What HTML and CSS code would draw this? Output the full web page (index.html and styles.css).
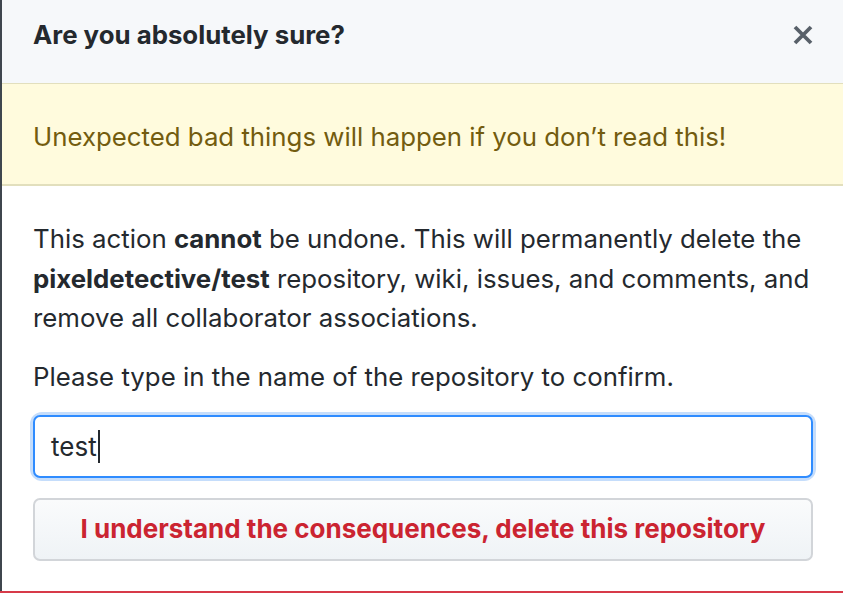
FILE: index.html
```html
<!DOCTYPE html>
<html lang="en">
<head>
<meta charset="utf-8">
<title>Delete repository</title>
<link rel="stylesheet" href="styles.css">
</head>
<body>
<div class="page">
  <div class="backdrop-edge"></div>
  <div class="modal">
    <div class="modal-header">
      <h3 class="modal-title">Are you absolutely sure?</h3>
      <button class="close-btn" aria-label="Close">
        <svg width="22" height="22" viewBox="0 0 22 22"><path d="M3 3 L19 19 M19 3 L3 19" stroke="#586069" stroke-width="3.8" stroke-linecap="butt" fill="none"/></svg>
      </button>
    </div>
    <div class="flash">Unexpected bad things will happen if you don’t read this!</div>
    <div class="modal-body">
      <p class="text">This action <strong>cannot</strong> be undone. This will permanently delete the <strong>pixeldetective/test</strong> repository, wiki, issues, and comments, and remove all collaborator associations.</p>
      <p class="text">Please type in the name of the repository to confirm.</p>
      <div class="input-wrap">
        <div class="input"><span>test</span><span class="caret"></span></div>
      </div>
      <button class="danger-btn">I understand the consequences, delete this repository</button>
    </div>
  </div>
</div>
</body>
</html>
```

FILE: styles.css
```css
* { box-sizing: border-box; }
html, body { margin: 0; padding: 0; background: #fff; }
body {
  font-family: Inter, "Noto Sans", "Liberation Sans", sans-serif;
  color: #24292e;
  width: 843px;
  height: 593px;
  overflow: hidden;
}
.page {
  display: flex;
  height: 593px;
  border-bottom: 2px solid #d73a49;
}
.backdrop-edge {
  width: 2px;
  background: #3f464e;
  flex: none;
}
.modal {
  flex: 1;
  display: flex;
  flex-direction: column;
}
.modal-header {
  height: 83px;
  background: #f6f8fa;
  display: flex;
  align-items: center;
  justify-content: space-between;
  padding: 0 29px 14px 31px;
}
.modal-title {
  margin: 0;
  font-size: 25.8px;
  font-weight: 700;
  color: #24292e;
}
.close-btn {
  border: 0;
  background: transparent;
  padding: 0;
  width: 22px;
  height: 22px;
  display: flex;
}
.flash {
  background: #fffbdd;
  border-top: 1px solid #e2dfbd;
  border-bottom: 2px solid #e2dfbd;
  color: #735c0f;
  font-size: 25.8px;
  height: 103px;
  display: flex;
  align-items: center;
  padding: 4px 31px 0;
}
.modal-body {
  padding: 33px 30px 0 31px;
}
.text {
  margin: 0 0 19px;
  font-size: 25.8px;
  line-height: 39.5px;
}
.text strong { font-weight: 700; }
.input-wrap {
  margin-top: 13px;
  border-radius: 9px;
  box-shadow: 0 0 0 3px #c5ddfb;
}
.input {
  height: 63px;
  border: 2px solid #2f8cff;
  border-radius: 7px;
  background: #fff;
  display: flex;
  align-items: center;
  padding: 0 16px;
  font-size: 26px;
  color: #24292e;
}
.caret {
  display: inline-block;
  width: 2px;
  height: 33px;
  background: #24292e;
  margin-left: 1px;
}
.danger-btn {
  margin-top: 20px;
  width: 100%;
  height: 63px;
  border: 2px solid #d2d5d9;
  border-radius: 7px;
  background: linear-gradient(#fafbfc, #eff3f6);
  color: #cb2431;
  font-family: Inter, "Noto Sans", "Liberation Sans", sans-serif;
  font-size: 26px;
  font-weight: 700;
  padding: 0 0 2px;
}
```
